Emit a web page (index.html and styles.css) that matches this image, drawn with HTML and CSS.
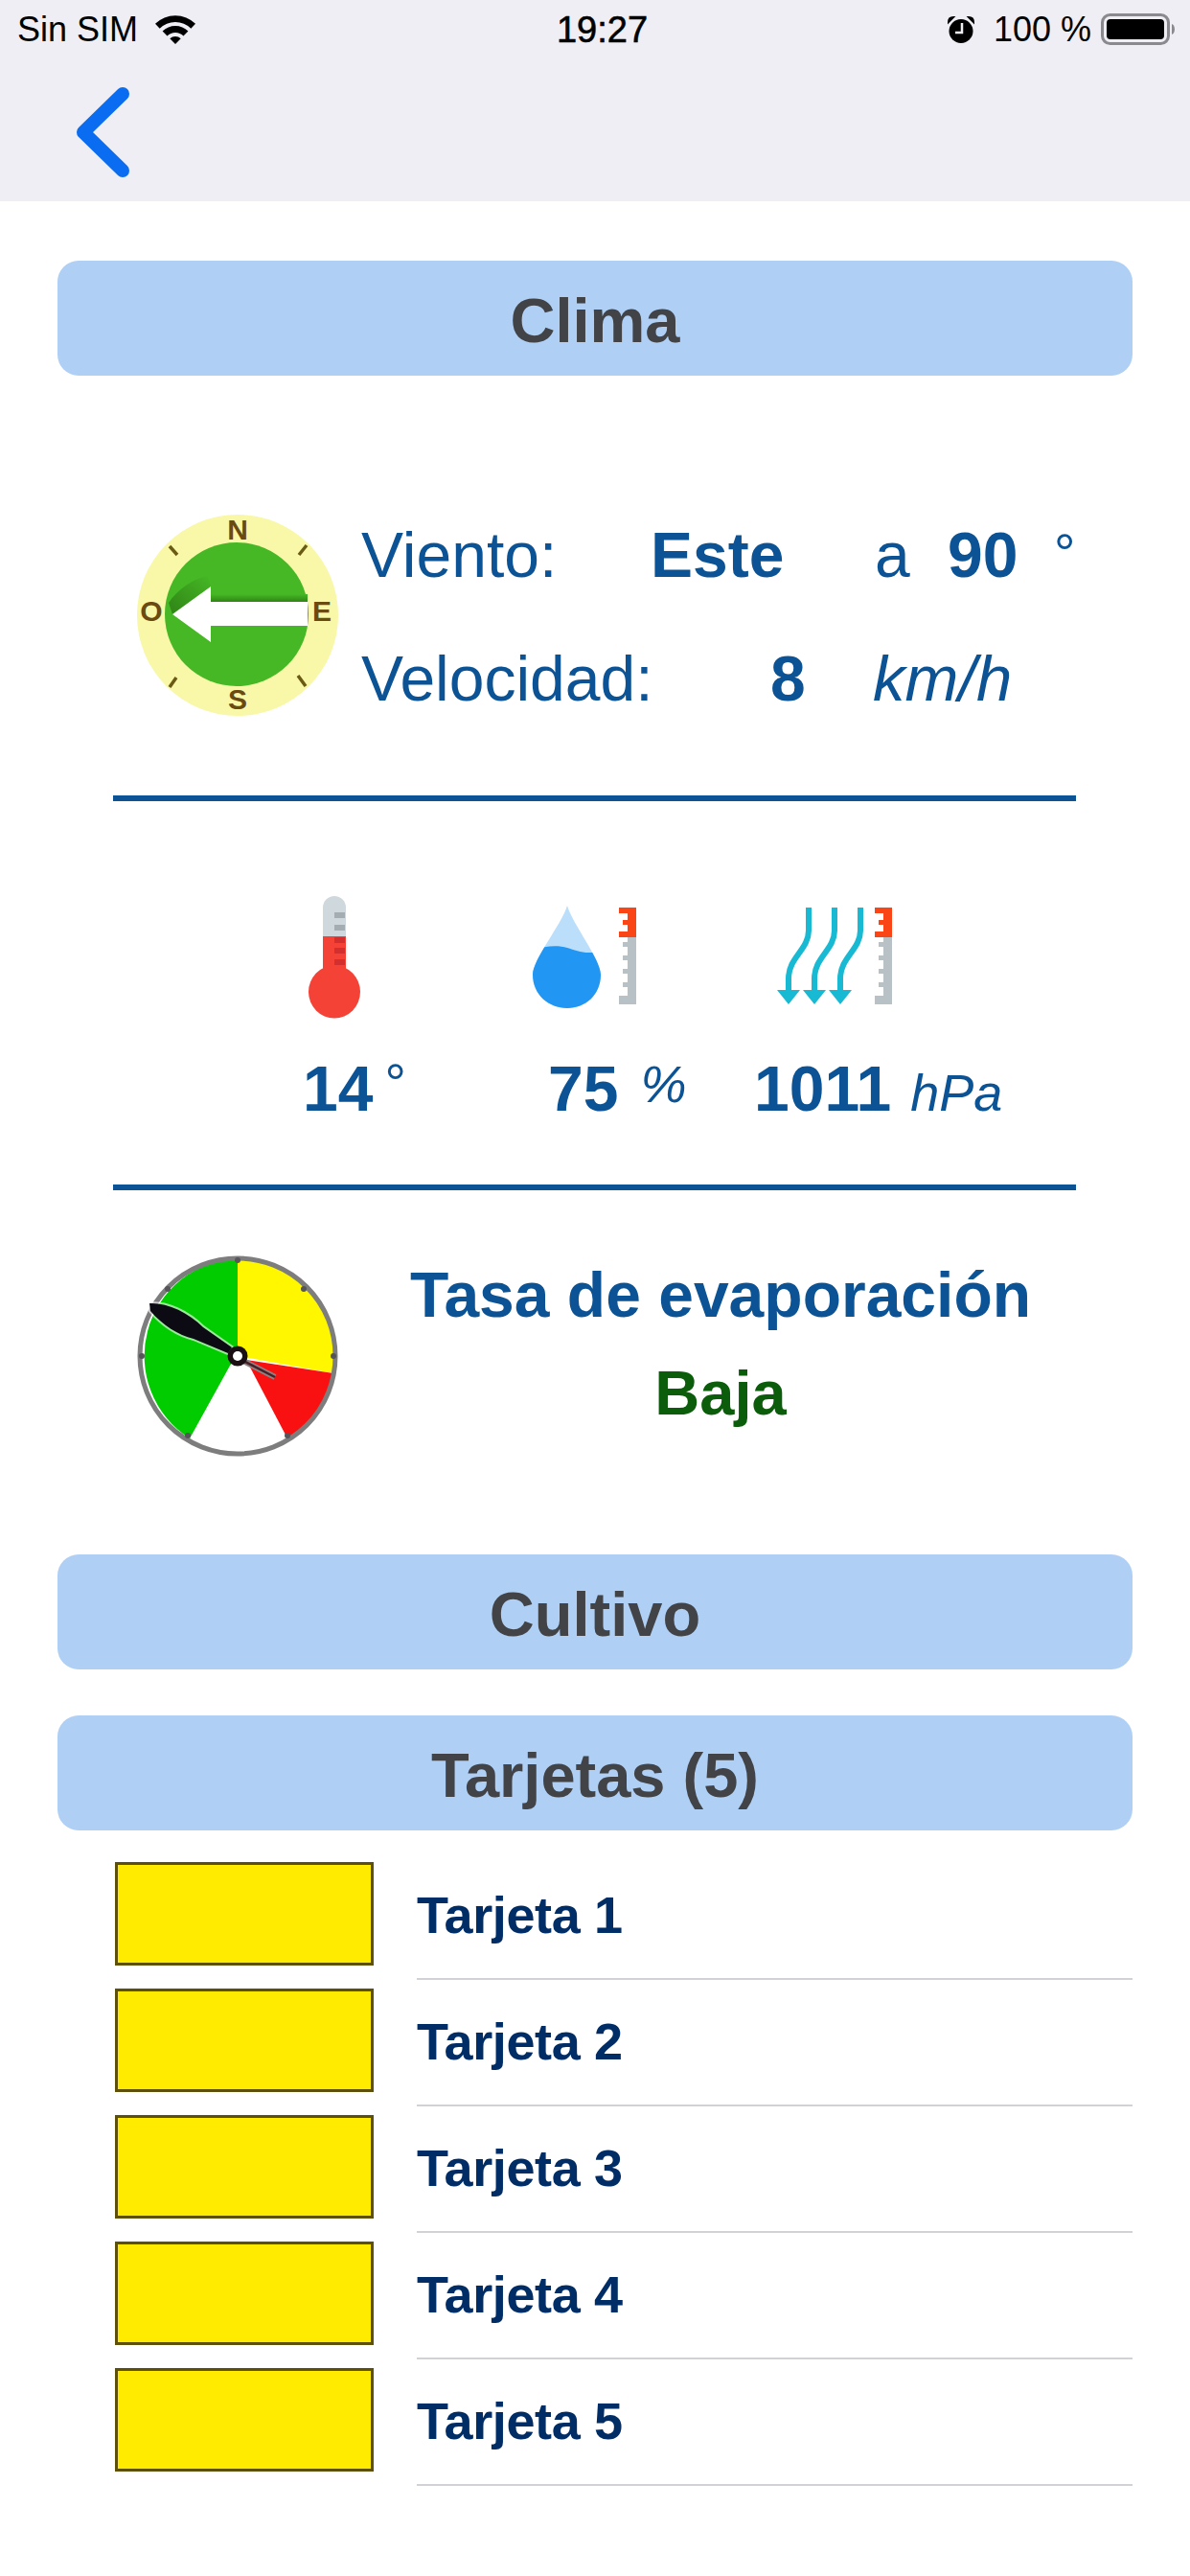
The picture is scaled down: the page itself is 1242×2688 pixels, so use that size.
FILE: index.html
```html
<!DOCTYPE html>
<html lang="es">
<head>
    <meta charset="UTF-8">
    <meta name="viewport" content="width=device-width, initial-scale=1.0">
    <title>Clima</title>
    <link rel="stylesheet" href="styles.css">
</head>
<body>
    <header class="topbar">
        <div class="status">
            <div class="status-left">
                <span>Sin SIM</span>
                <svg class="wifi" width="42" height="30" viewBox="0 0 42 30">
                    <path d="M0 8.800A30 30 0 0 1 42 8.800L37.300 13.700A23 23 0 0 0 4.700 13.700Z"/>
                    <path d="M7.600 16.600A19 19 0 0 1 34.400 16.600L29.500 21.500A12 12 0 0 0 12.500 21.500Z"/>
                    <path d="M15.300 24.300A8.500 8.500 0 0 1 26.700 24.300L21 30Z"/>
                </svg>
            </div>
            <span class="status-time">19:27</span>
            <div class="status-right">
                <svg class="alarm" width="28" height="28" viewBox="0 0 28 28">
                    <circle cx="14" cy="15.500" r="12.500"/>
                    <path d="M1 6C1 3 3 1 6 1ZM27 6C27 3 25 1 22 1Z" stroke="#000" stroke-width="2"/>
                    <path d="M15 7V17H8" stroke="#eeeef4" stroke-width="2.500" fill="none"/>
                </svg>
                <span>100 %</span>
                <svg class="battery" width="78" height="34" viewBox="0 0 78 34">
                    <rect x="1.500" y="1.500" width="69" height="30" rx="8" fill="none" stroke="#8a8a8e" stroke-width="3"/>
                    <rect x="6" y="6" width="60" height="21" rx="4"/>
                    <path d="M74 11C78 12 78 21 74 22Z" fill="#8a8a8e"/>
                </svg>
            </div>
        </div>
        <svg class="back" width="62" height="100" viewBox="0 0 62 100">
            <path d="M52 10L11 50L52 90" fill="none" stroke="#0a6cf0" stroke-width="14" stroke-linecap="round" stroke-linejoin="round"/>
        </svg>
    </header>

    <main class="content">
        <h2 class="band">Clima</h2>

        <section class="wind">
            <svg class="dial" width="212" height="212" viewBox="0 0 212 212">
                <defs>
                    <linearGradient id="shaftShadow" x1="0" y1="0" x2="0" y2="1">
                        <stop offset="0" stop-color="#46b825"/>
                        <stop offset="1" stop-color="#2f8316"/>
                    </linearGradient>
                    <linearGradient id="headShadow" x1="1" y1="0" x2="0" y2="1">
                        <stop offset="0" stop-color="#46b825"/>
                        <stop offset="1" stop-color="#2f8316"/>
                    </linearGradient>
                </defs>
                <circle cx="105" cy="105" r="105" fill="#f8f8a8"/>
                <circle cx="104" cy="104" r="75" fill="#46b825"/>
                <path d="M33 92C42 78 60 66 74 64L77 75L37 104Z" fill="url(#headShadow)"/>
                <rect x="77" y="83" width="101" height="8" fill="url(#shaftShadow)"/>
                <path d="M37 104L77 75V91H178V116H77V133Z" fill="#fff"/>
                <g class="dial-letters">
                    <text x="105" y="26">N</text>
                    <text x="105" y="203">S</text>
                    <text x="15" y="111">O</text>
                    <text x="193" y="111">E</text>
                </g>
                <path d="M34 33L42 42M177 32L169 42M34 180L41 170M176 179L168 168" stroke="#6b5a14" stroke-width="3.500"/>
            </svg>
            <div class="wind-rows">
                <div class="wind-row">
                    <span class="wind-label">Viento:</span>
                    <strong class="wind-dir">Este</strong>
                    <span class="wind-a">a</span>
                    <strong class="wind-deg">90</strong>
                    <span class="wind-sign">°</span>
                </div>
                <div class="wind-row">
                    <span class="wind-label wind-label-long">Velocidad:</span>
                    <strong class="wind-speed">8</strong>
                    <em class="wind-unit">km/h</em>
                </div>
            </div>
        </section>

        <section class="readings">
            <div class="reading reading-temp">
                <svg width="56" height="128" viewBox="0 0 56 128">
                    <rect x="15" y="0" width="24" height="70" rx="12" fill="#cfd8dc"/>
                    <rect x="15" y="42" width="24" height="40" fill="#f44336"/>
                    <ellipse cx="27" cy="100" rx="27" ry="27.500" fill="#f44336"/>
                    <path d="M27 20H38M27 33H38" stroke="#a4adb2" stroke-width="6"/>
                    <path d="M27 46H38M27 57H38M27 69H38" stroke="#d32f2f" stroke-width="6"/>
                </svg>
                <div class="reading-value"><strong>14</strong><span class="reading-deg">°</span></div>
            </div>
            <div class="reading reading-hum">
                <svg width="110" height="110" viewBox="0 0 110 110">
                    <defs>
                        <clipPath id="dropShape">
                            <path d="M36 0C42 20 71 56 71 72C71 93 55 107 36 107C17 107 0 93 0 72C0 56 30 20 36 0Z"/>
                        </clipPath>
                    </defs>
                    <g clip-path="url(#dropShape)">
                        <rect width="72" height="108" fill="#bbdefb"/>
                        <path d="M0 46C14 42 26 41 36 44C46 47 56 52 72 47V108H0Z" fill="#2196f3"/>
                    </g>
                    <g fill="#b8c1c6">
                        <rect x="99" y="33" width="9" height="70"/>
                        <rect x="90" y="94" width="18" height="9"/>
                        <rect x="94" y="80" width="14" height="5"/>
                        <rect x="94" y="66" width="14" height="5"/>
                        <rect x="94" y="52" width="14" height="5"/>
                        <rect x="94" y="38" width="14" height="5"/>
                    </g>
                    <g fill="#fa4616">
                        <rect x="99" y="2" width="9" height="31"/>
                        <rect x="90" y="2" width="18" height="6"/>
                        <rect x="94" y="15" width="14" height="5"/>
                        <rect x="90" y="27" width="18" height="6"/>
                    </g>
                </svg>
                <div class="reading-value"><strong>75</strong><em class="reading-unit">%</em></div>
            </div>
            <div class="reading reading-press">
                <svg width="122" height="110" viewBox="0 0 122 110">
                    <g fill="none" stroke="#17b9d3" stroke-width="6">
                        <path d="M33 2V26C33 46 12 54 12 76V92"/>
                        <path d="M60 2V26C60 46 39 54 39 76V92"/>
                        <path d="M87 2V26C87 46 66 54 66 76V92"/>
                    </g>
                    <path d="M0 88H24L12 103ZM27 88H51L39 103ZM54 88H78L66 103Z" fill="#17b9d3"/>
                    <g fill="#b8c1c6">
                        <rect x="111" y="33" width="9" height="70"/>
                        <rect x="102" y="94" width="18" height="9"/>
                        <rect x="106" y="80" width="14" height="5"/>
                        <rect x="106" y="66" width="14" height="5"/>
                        <rect x="106" y="52" width="14" height="5"/>
                        <rect x="106" y="38" width="14" height="5"/>
                    </g>
                    <g fill="#fa4616">
                        <rect x="111" y="2" width="9" height="31"/>
                        <rect x="102" y="2" width="18" height="6"/>
                        <rect x="106" y="15" width="14" height="5"/>
                        <rect x="102" y="27" width="18" height="6"/>
                    </g>
                </svg>
                <div class="reading-value"><strong>1011</strong><em class="reading-unit">hPa</em></div>
            </div>
        </section>

        <section class="evap">
            <svg class="dial" width="212" height="212" viewBox="0 0 212 212">
                <circle cx="106" cy="106" r="102" fill="#fff"/>
                <path d="M106 106V4A102 102 0 0 1 206 124Z" fill="#fff700"/>
                <path d="M115 110L206 124A102 102 0 0 1 158 192Z" fill="#f91010"/>
                <path d="M98 116L56 192A102 102 0 0 1 106 4V106Z" fill="#00cc00"/>
                <circle cx="106" cy="106" r="102" fill="none" stroke="#7d7d7d" stroke-width="5"/>
                <g fill="#55555a">
                    <circle cx="106" cy="6" r="3"/>
                    <circle cx="175" cy="36" r="3"/>
                    <circle cx="206" cy="106" r="3"/>
                    <circle cx="158" cy="189" r="3"/>
                    <circle cx="54" cy="189" r="3"/>
                    <circle cx="6" cy="106" r="3"/>
                    <circle cx="33" cy="36" r="3"/>
                </g>
                <path d="M14 51C32 50 54 60 70 76L100 97L96 103L60 88C44 84 28 74 15 59Z" fill="#fff" stroke="#fff" stroke-width="4" opacity=".6"/>
                <path d="M14 51C32 50 54 60 70 76L100 97L96 103L60 88C44 84 28 74 15 59Z" fill="#0c0a12"/>
                <path d="M110 110L145 128" stroke="#8c8484" stroke-width="6"/>
                <path d="M110 110L145 128" stroke="#4a2028" stroke-width="2.500"/>
                <circle cx="106" cy="106" r="10.500" fill="#1a1014"/>
                <circle cx="106" cy="106" r="5" fill="#fff"/>
            </svg>
            <div class="evap-text">
                <h3>Tasa de evaporación</h3>
                <p>Baja</p>
            </div>
        </section>

        <h2 class="band band-cultivo">Cultivo</h2>
        <h2 class="band band-cards">Tarjetas (5)</h2>

        <ul class="cards">
            <li class="card"><span class="card-swatch"></span><span class="card-name">Tarjeta 1</span></li>
            <li class="card"><span class="card-swatch"></span><span class="card-name">Tarjeta 2</span></li>
            <li class="card"><span class="card-swatch"></span><span class="card-name">Tarjeta 3</span></li>
            <li class="card"><span class="card-swatch"></span><span class="card-name">Tarjeta 4</span></li>
            <li class="card"><span class="card-swatch"></span><span class="card-name">Tarjeta 5</span></li>
        </ul>
    </main>
</body>
</html>
```

FILE: styles.css
```css
* {
    margin: 0;
    padding: 0;
    box-sizing: border-box;
}

body {
    width: 1242px;
    min-height: 2688px;
    background-color: white;
    font-family: "Liberation Sans", Arial, sans-serif;
    color: #0b5394;
}

svg {
    display: block;
    flex: none;
}

/* top bar */
.topbar {
    height: 210px;
    background-color: #eeeef4;
    color: black;
}

.status {
    height: 60px;
    padding: 2px 15px 0 18px;
    display: grid;
    grid-template-columns: 1fr auto 1fr;
    align-items: center;
    font-size: 36px;
}

.status-left,
.status-right {
    display: flex;
    align-items: center;
}

.status-left {
    gap: 18px;
}

.status-right {
    justify-content: flex-end;
}

.alarm {
    margin-right: 20px;
}

.battery {
    margin-left: 10px;
}

.status-time {
    margin-left: 12px;
    font-size: 38px;
    -webkit-text-stroke: 0.6px black;
}

.back {
    margin: 28px 0 0 76px;
}

/* blue bands */
.content {
    padding: 62px 60px 0;
}

.band {
    height: 120px;
    line-height: 126px;
    border-radius: 22px;
    background-color: #afcff5;
    color: #414347;
    font-size: 65px;
    font-weight: bold;
    text-align: center;
}

.band-cultivo {
    margin-top: 101px;
}

.band-cards {
    margin-top: 48px;
}

/* wind */
.dial-letters text {
    fill: #6b4a10;
    font-size: 30px;
    font-weight: bold;
    text-anchor: middle;
}

.wind {
    margin-top: 145px;
    padding: 0 0 81px 83px;
    display: flex;
    align-items: center;
    gap: 22px;
}

.wind-rows {
    display: flex;
    flex-direction: column;
    gap: 52px;
    font-size: 66px;
}

.wind-row {
    display: flex;
    align-items: baseline;
    height: 76px;
    white-space: nowrap;
}

.wind-label {
    width: 302px;
}

.wind-label-long {
    width: 427px;
}

.wind-dir {
    width: 234px;
}

.wind-a {
    width: 76px;
}

.wind-deg {
    width: 111px;
}

.wind-sign {
    font-size: 56px;
    position: relative;
    top: -6px;
}

.wind-speed {
    width: 107px;
}

.wind-unit {
    font-size: 67px;
}

/* readings */
.readings {
    margin: 0 59px 0 58px;
    height: 412px;
    border-top: 6px solid #0b5394;
    border-bottom: 6px solid #0b5394;
    display: grid;
    grid-template-columns: 234px 255px 1fr;
    padding: 99px 0 0 204px;
    align-items: start;
}

.reading {
    display: flex;
    flex-direction: column;
}

.reading-temp {
    align-items: flex-start;
}

.reading-hum,
.reading-press {
    padding-top: 10px;
}

.reading-value {
    display: flex;
    align-items: baseline;
    margin-top: 35px;
    font-size: 66px;
    white-space: nowrap;
}

.reading-temp .reading-value {
    margin-left: -6px;
}

.reading-hum .reading-value {
    margin-top: 43px;
    margin-left: 16px;
}

.reading-press .reading-value {
    margin-top: 43px;
    margin-left: -24px;
}

.reading-deg {
    font-size: 56px;
    font-weight: normal;
    margin-left: 12px;
    position: relative;
    top: -10px;
}

.reading-unit {
    font-size: 54px;
    margin-left: 20px;
}

.reading-hum .reading-unit {
    margin-left: 23px;
    position: relative;
    top: -9px;
}

/* evaporation */
.evap {
    margin-top: 67px;
    padding-left: 82px;
    display: flex;
    align-items: flex-start;
}

.evap-text {
    width: 720px;
    margin-left: 38px;
    padding-top: 4px;
    text-align: center;
}

.evap-text h3 {
    font-size: 66px;
    line-height: 76px;
}

.evap-text p {
    margin-top: 27px;
    font-size: 65px;
    line-height: 76px;
    font-weight: bold;
    color: #0b5c0b;
}

/* cards */
.cards {
    list-style: none;
    margin-top: 33px;
}

.card {
    height: 132px;
    display: flex;
    align-items: flex-start;
}

.card-swatch {
    flex: none;
    width: 270px;
    height: 108px;
    margin-left: 60px;
    border: 3px solid #5e5008;
    background-color: #ffeb00;
}

.card-name {
    flex: 1;
    height: 123px;
    margin-left: 45px;
    border-bottom: 2px solid #d2d2d6;
    line-height: 110px;
    font-size: 54px;
    font-weight: bold;
    letter-spacing: -0.4px;
    color: #002d66;
}
```
